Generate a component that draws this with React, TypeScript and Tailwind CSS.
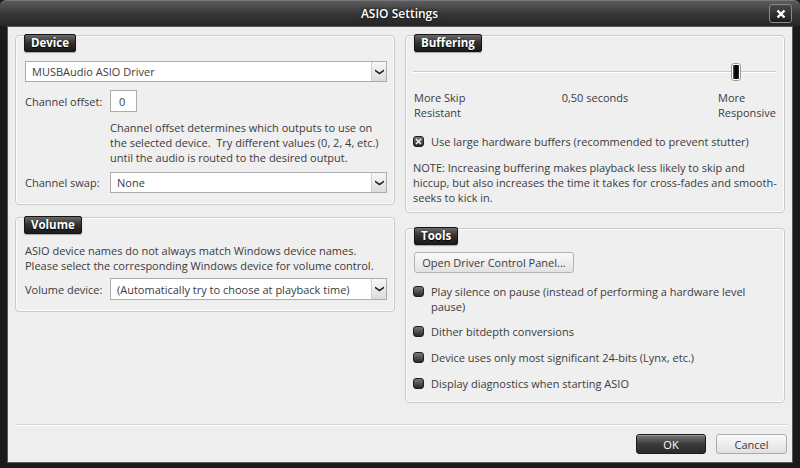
import React from "react";

const txt = "text-[#3b3b3b]";

function Chevron() {
  return (
    <svg width="9" height="6" viewBox="0 0 9 6">
      <path d="M0 0.5 L4.5 3.5 L9 0.5 L9 2.3 L4.5 5.5 L0 2.3 Z" fill="#1e1e1e" />
    </svg>
  );
}

function Select({ value, h = "h-[21px]" }: { value: string; h?: string }) {
  return (
    <div className={`flex ${h} flex-1 border border-[#acacac] bg-white`}>
      <div className={`flex-1 flex items-center pl-[6px] ${txt} whitespace-nowrap`}>{value}</div>
      <div className="w-[15px] flex items-center justify-center border-l border-[#cfcfcf] bg-linear-to-b from-[#f7f7f7] to-[#dcdcdc]">
        <Chevron />
      </div>
    </div>
  );
}

function Tab({ label }: { label: string }) {
  return (
    <div className="self-start ml-[8px] -mt-[2px] h-[18px] px-[6px] flex items-center rounded-[2px] border border-[#151515] bg-linear-to-b from-[#6a6a6a] via-[#303030] to-[#1b1b1b] text-white font-bold text-[11.5px] leading-none shadow-[0_1px_1px_rgba(0,0,0,0.3)] [text-shadow:0_1px_1px_#000]">
      {label}
    </div>
  );
}

function Group({ label, h, children }: { label: string; h: string; children: React.ReactNode }) {
  return (
    <div className={`flex flex-col ${h} rounded-[4px] border border-[#cbcbcb] bg-[#efefef] shadow-[inset_0_0_0_1px_#fbfbfb]`}>
      <Tab label={label} />
      {children}
    </div>
  );
}

function Check({ checked = false }: { checked?: boolean }) {
  return (
    <div className="mt-[2px] w-[11px] h-[11px] shrink-0 rounded-[3px] border border-[#1e1e1e] bg-linear-to-b from-[#7a7a7a] to-[#2a2a2a] flex items-center justify-center">
      {checked && (
        <svg width="7" height="7" viewBox="0 0 7 7">
          <path d="M1 1 L6 6 M6 1 L1 6" stroke="#f2f2f2" strokeWidth="1.6" />
        </svg>
      )}
    </div>
  );
}

function CheckRow({ checked, children, mt }: { checked?: boolean; children: React.ReactNode; mt: string }) {
  return (
    <div className={`flex items-start gap-[7px] ${mt}`}>
      <Check checked={checked} />
      <div className="whitespace-nowrap">{children}</div>
    </div>
  );
}

export default function App() {
  return (
    <div className="w-[800px] h-[468px] flex flex-col bg-[#1a1a1a] font-['Open_Sans',sans-serif] text-[11px] leading-[15px] overflow-hidden">
      {/* title bar */}
      <div className="h-[26px] shrink-0 flex items-center bg-linear-to-b from-[#5c5c5c] via-[#383838] to-[#262626] border-t border-[#777] rounded-t-[6px]">
        <div className="w-[30px]" />
        <div className="flex-1 text-center text-white text-[12px] font-semibold [text-shadow:0_0_3px_#000]">
          ASIO Settings
        </div>
        <div className="mr-[8px] w-[23px] h-[19px] rounded-[3px] border border-[#8a8a8a] bg-linear-to-b from-[#4a4a4a] to-[#1c1c1c] flex items-center justify-center">
          <svg width="10" height="10" viewBox="0 0 10 10">
            <path d="M1.5 1.5 L8.5 8.5 M8.5 1.5 L1.5 8.5" stroke="#fff" strokeWidth="2.4" />
          </svg>
        </div>
      </div>

      {/* client area */}
      <div className="flex-1 mx-[7px] mb-[6px] flex flex-col border border-[#5a5a5a] bg-[#eeeeee] pt-[8px] pl-[7px] pr-[5px] pb-[8px]">
        <div className="flex gap-[10px]">
          {/* left column */}
          <div className="w-[380px] flex flex-col gap-[12px]">
            <Group label="Device" h="h-[170px]">
              <div className={`flex flex-col pl-[9px] pr-[7px] ${txt}`}>
                <div className="flex mt-[9px]">
                  <Select value="MUSBAudio ASIO Driver" />
                </div>
                <div className="flex items-center mt-[8px]">
                  <div className="w-[85px]">Channel offset:</div>
                  <div className="w-[27px] h-[22px] border border-[#acacac] bg-white flex items-center pl-[8px]">0</div>
                </div>
                <div className="ml-[85px] mt-[8px] whitespace-nowrap">
                  Channel offset determines which outputs to use on
                  <br />
                  the selected device.&nbsp; Try different values (0, 2, 4, etc.)
                  <br />
                  until the audio is routed to the desired output.
                </div>
                <div className="flex items-center mt-[7px]">
                  <div className="w-[85px]">Channel swap:</div>
                  <Select value="None" />
                </div>
              </div>
            </Group>

            <Group label="Volume" h="h-[95px]">
              <div className={`flex flex-col pl-[9px] pr-[7px] ${txt}`}>
                <div className="mt-[9px] whitespace-nowrap">
                  ASIO device names do not always match Windows device names.
                  <br />
                  Please select the corresponding Windows device for volume control.
                </div>
                <div className="flex items-center mt-[5px]">
                  <div className="w-[85px]">Volume device:</div>
                  <Select value="(Automatically try to choose at playback time)" h="h-[22px]" />
                </div>
              </div>
            </Group>
          </div>

          {/* right column */}
          <div className="w-[380px] flex flex-col gap-[15px]">
            <Group label="Buffering" h="h-[178px]">
              <div className={`flex flex-col pl-[7px] pr-[8px] ${txt}`}>
                <div className="relative mt-[11px] h-[18px] flex items-center">
                  <div className="w-full h-[2px] bg-[#c9c9c9] border-b border-white" />
                  <div className="absolute left-[318px] top-0 w-[10px] h-[18px] rounded-[3px] border border-[#9a9a9a] bg-white p-[1px]">
                    <div className="w-full h-full rounded-[1px] bg-linear-to-r from-[#555] via-[#000] to-[#333]" />
                  </div>
                </div>
                <div className="grid grid-cols-3 mt-[9px] pl-[1px]">
                  <div>
                    More Skip
                    <br />
                    Resistant
                  </div>
                  <div className="text-center whitespace-nowrap">0,50 seconds</div>
                  <div className="justify-self-end">
                    More
                    <br />
                    Responsive
                  </div>
                </div>
                <CheckRow checked mt="mt-[14px]">
                  Use large hardware buffers (recommended to prevent stutter)
                </CheckRow>
                <div className="mt-[11px] whitespace-nowrap">
                  NOTE: Increasing buffering makes playback less likely to skip and
                  <br />
                  hiccup, but also increases the time it takes for cross-fades and smooth-
                  <br />
                  seeks to kick in.
                </div>
              </div>
            </Group>

            <Group label="Tools" h="h-[175px]">
              <div className={`flex flex-col pl-[7px] pr-[8px] ${txt}`}>
                <div className="mt-[7px] ml-[1px] self-start w-[160px] h-[21px] rounded-[3px] border border-[#b4b4b4] bg-linear-to-b from-[#fafafa] to-[#e2e2e2] flex items-center justify-center">
                  Open Driver Control Panel...
                </div>
                <CheckRow mt="mt-[11px]">
                  Play silence on pause (instead of performing a hardware level
                  <br />
                  pause)
                </CheckRow>
                <CheckRow mt="mt-[10px]">Dither bitdepth conversions</CheckRow>
                <CheckRow mt="mt-[11px]">Device uses only most significant 24-bits (Lynx, etc.)</CheckRow>
                <CheckRow mt="mt-[11px]">Display diagnostics when starting ASIO</CheckRow>
              </div>
            </Group>
          </div>
        </div>

        {/* separator */}
        <div className="mt-[21px] h-[2px] border-t border-[#d6d6d6] border-b border-b-white" />

        <div className="mt-[8px] flex justify-end gap-[10px]">
          <div className="w-[70px] h-[20px] rounded-[3px] border border-[#1a1a1a] bg-linear-to-b from-[#7a7a7a] via-[#3c3c3c] to-[#2a2a2a] text-white flex items-center justify-center shadow-[inset_0_1px_0_#999]">
            OK
          </div>
          <div className={`w-[71px] h-[20px] rounded-[3px] border border-[#acacac] bg-linear-to-b from-[#fafafa] to-[#e0e0e0] ${txt} flex items-center justify-center`}>
            Cancel
          </div>
        </div>
      </div>
    </div>
  );
}
